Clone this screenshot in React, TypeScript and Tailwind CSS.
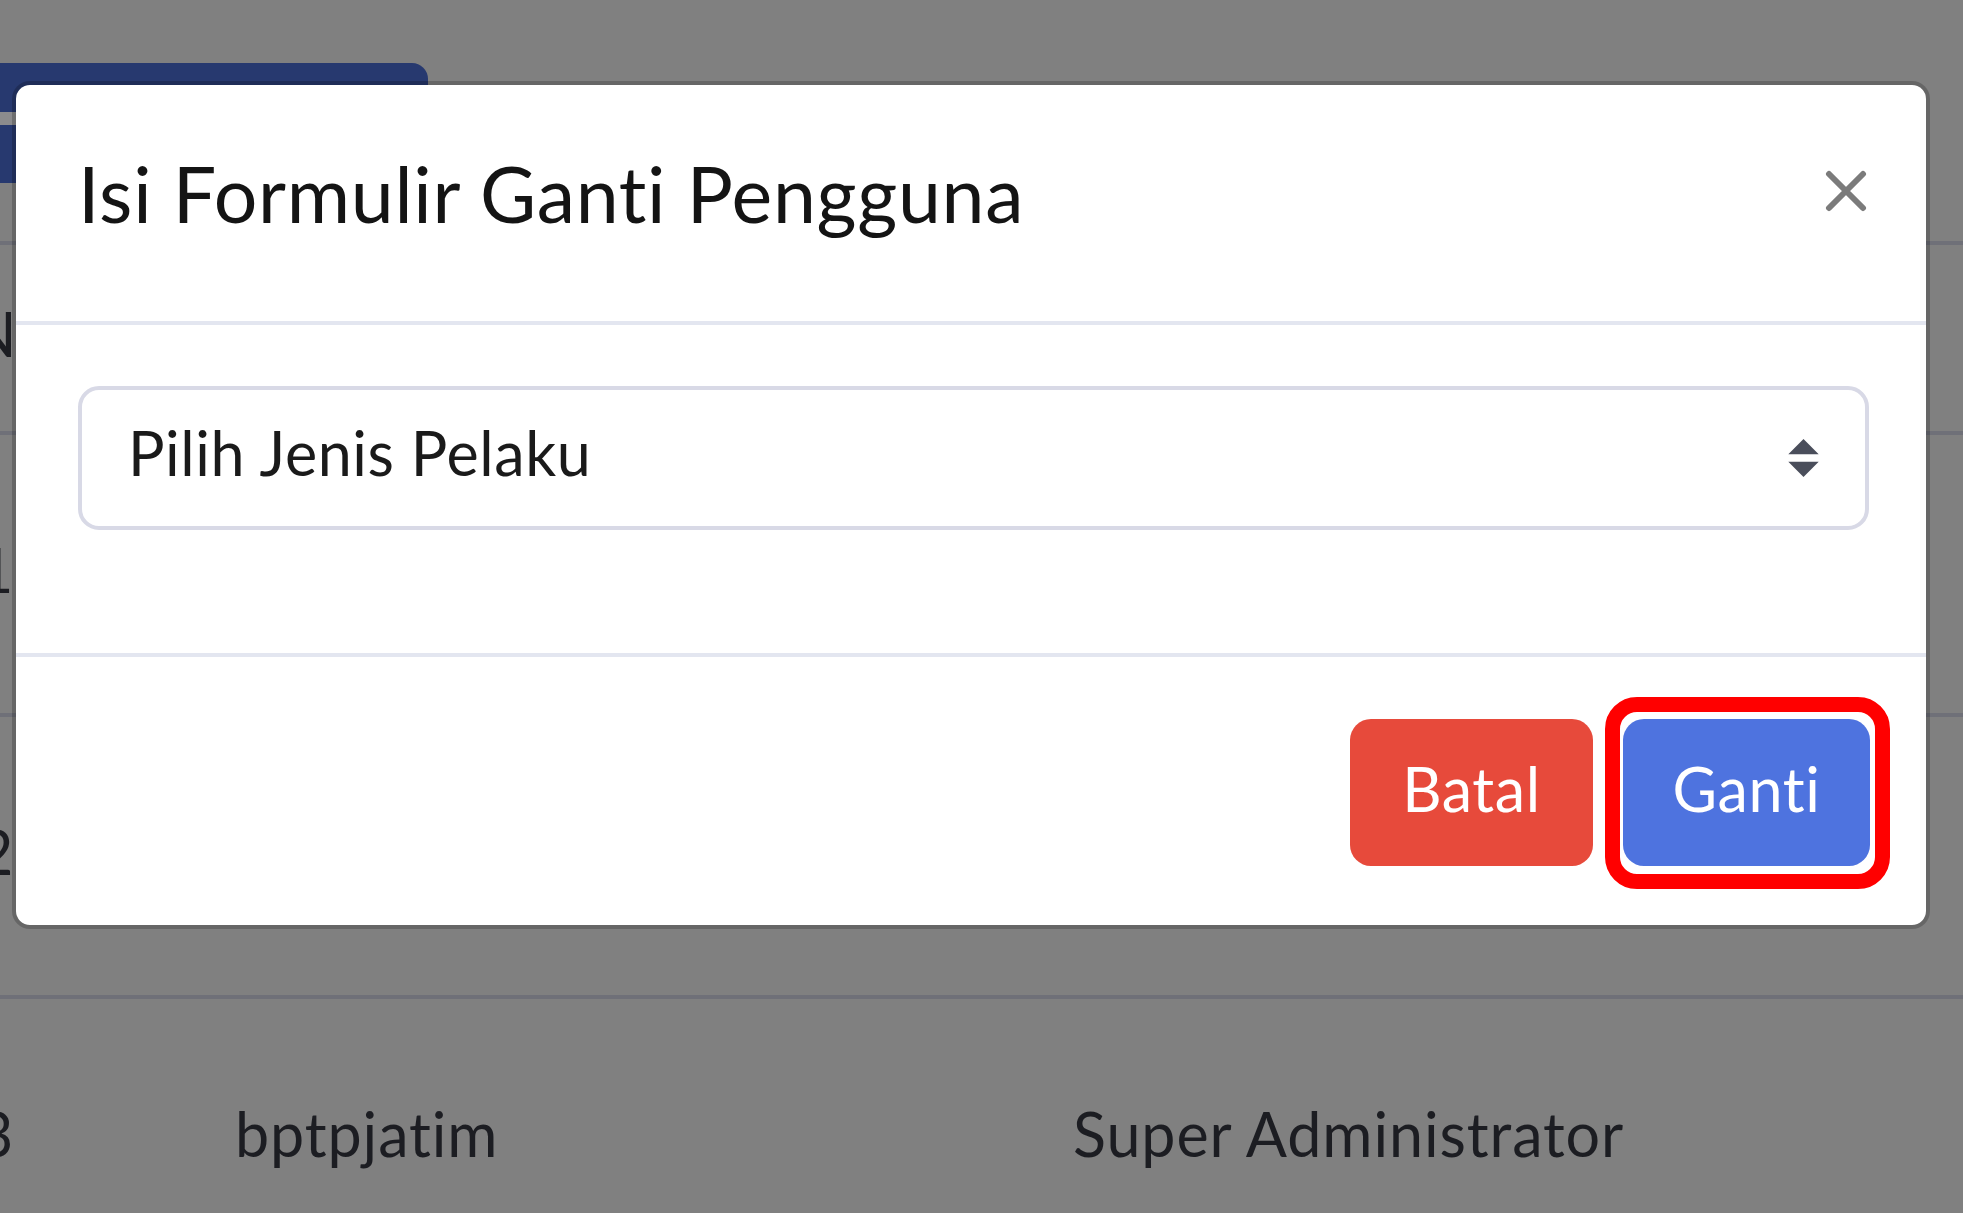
import React from "react"

const font = "font-[Lato,'Noto_Sans',sans-serif] [font-variant-ligatures:none]"

function SelectArrows() {
  return (
    <svg width="31" height="38" viewBox="0 0 4 5" className="shrink-0">
      <path d="M2 0L0 2h4zm0 5L0 3h4z" fill="#4a4e5b" />
    </svg>
  )
}

function CloseIcon() {
  return (
    <svg width="42" height="42" viewBox="0 0 42 42">
      <path d="M4 4L38 38M38 4L4 38" stroke="#7b7b7b" strokeWidth="6" strokeLinecap="round" />
    </svg>
  )
}

function PageBehind() {
  const rows = [
    { no: "1", user: "", role: "" },
    { no: "2", user: "", role: "" },
    { no: "3", user: "bptpjatim", role: "Super Administrator" },
  ]
  return (
    <div className="pt-[63px] text-[61px] tracking-[0.9px] text-[#1c1d22]">
      <div className="w-[428px]">
        <div className="h-[49px] rounded-tr-[16px] bg-[#27396f]" />
        <div className="h-[13px] bg-[#8b8b8d]" />
        <div className="h-[58px] bg-[#27396f]" />
      </div>
      <div className="mt-[58px]">
        <div className="flex h-[190px] items-center border-t-4 border-[#6f7078] pb-[8px]">
          <div className="ml-[-30px] w-[265px]">No</div>
        </div>
        {rows.map((r) => (
          <div key={r.no} className="flex h-[282px] items-center border-t-4 border-[#6f7078] pb-[8px]">
            <div className="ml-[-22px] w-[257px]">{r.no}</div>
            <div className="w-[838px]">{r.user}</div>
            <div>{r.role}</div>
          </div>
        ))}
      </div>
    </div>
  )
}

export default function App() {
  return (
    <div className={`relative h-[1213px] w-[1963px] overflow-hidden bg-[#808080] ${font}`}>
      <PageBehind />

      {/* modal */}
      <div className="absolute left-[12px] top-[81px] flex h-[848px] w-[1918px] flex-col rounded-[18px] border-4 border-black/20 bg-white bg-clip-padding">
        <div className="flex items-start justify-between border-b-4 border-[#e3e6f0] pl-[62px] pr-[59px] pt-[51px] pb-[70px]">
          <h5 className="text-[77px] leading-[115px] tracking-[0.7px] text-[#141414]">Isi Formulir Ganti Pengguna</h5>
          <button className="mt-[34px]">
            <CloseIcon />
          </button>
        </div>

        <div className="px-[62px] pt-[61px] pb-[123px] pr-[57px]">
          <div className="flex h-[144px] items-center justify-between rounded-[21px] border-4 border-[#d8d9e6] pl-[46px] pr-[46px] pb-[12px]">
            <span className="text-[61px] leading-none tracking-[0.6px] text-[#1a1a1a]">Pilih Jenis Pelaku</span>
            <span className="pt-[12px]">
              <SelectArrows />
            </span>
          </div>
        </div>

        <div className="flex flex-1 items-center justify-end gap-[30px] border-t-4 border-[#e3e6f0] pr-[56px] pt-[2px]">
          <button className="flex h-[147px] w-[243px] items-center justify-center rounded-[21px] bg-[#e74a3b] pb-[8px] text-[61px] leading-none tracking-[0.6px] text-white">
            Batal
          </button>
          <div className="relative">
            <button className="flex h-[147px] w-[247px] items-center justify-center rounded-[21px] bg-[#4e73df] pb-[8px] text-[61px] leading-none tracking-[0.6px] text-white">
              Ganti
            </button>
            <div className="pointer-events-none absolute -left-[18px] -right-[20px] -top-[22px] -bottom-[23px] rounded-[32px] border-[15px] border-[#ff0000]" />
          </div>
        </div>
      </div>
    </div>
  )
}
